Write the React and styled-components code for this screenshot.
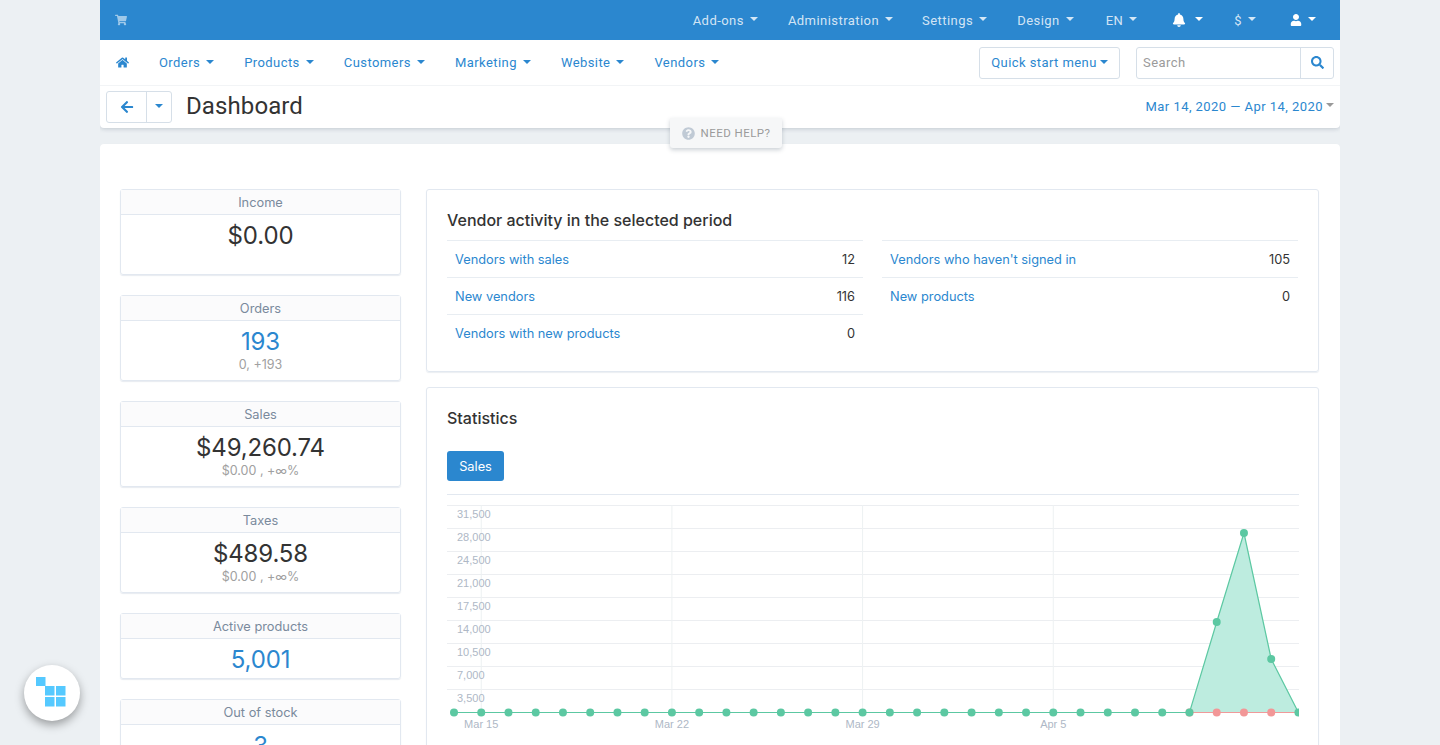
import React from 'react';
import styled, { createGlobalStyle } from 'styled-components';
import { FaShoppingCart, FaHome, FaArrowLeft, FaBell, FaUser, FaSearch, FaQuestionCircle } from 'react-icons/fa';

const Global = createGlobalStyle`
  html, body { margin: 0; padding: 0; height: 100%; overflow: hidden; background: #ecf0f3; }
  body { font-family: Inter, "Liberation Sans", sans-serif; color: #333; }
  * { box-sizing: border-box; }
`;
const Page = styled.div`width: 1240px; margin: 0 auto; height: 745px; overflow: hidden; position: relative;`;
const Header = styled.header`background: #fff; border-radius: 0 0 4px 4px; box-shadow: 0 1px 4px rgba(50,70,90,.22); height: 128px;`;
const TopBar = styled.div`height: 40px; background: #2b87cf; display: flex; align-items: center; justify-content: space-between; padding: 0 24px 0 15px;`;
const CartMark = styled.span`color: rgba(255,255,255,.55); font-size: 12px; display: flex;`;
const TopMenu = styled.nav`display: flex; align-items: center;`;
const Caret = styled.i`display: inline-block; width: 0; height: 0; margin-left: ${p => p.$gap ?? 6}px; border-left: 4px solid transparent; border-right: 4px solid transparent; border-top: 4px solid ${p => p.$color || 'currentColor'}; vertical-align: middle; position: relative; top: -1px;`;
const TopItem = styled.a`color: rgba(255,255,255,.8); font: 400 13px Roboto, sans-serif; letter-spacing: .45px; margin-left: ${p => p.$ml}px; display: flex; align-items: center; white-space: nowrap; ${p => p.$white && 'color:#fff;'}`;
const NavBar = styled.div`height: 46px; display: flex; align-items: center; padding: 0 6px 0 16px; border-bottom: 1px solid #f2f4f6;`;
const HomeMark = styled.span`color: #2b87cf; font-size: 13px; display: flex; margin-right: 30px;`;
const NavItem = styled.a`color: #2b87cf; font: 400 13px Roboto, sans-serif; letter-spacing: .43px; margin-right: 30px; display: flex; align-items: center; white-space: nowrap;`;
const Spacer = styled.div`flex: 1;`;
const QuickBtn = styled.button`height: 32px; width: 141px; padding: 0; margin-right: 16px; background: #fff; border: 1px solid #d6dfe8; border-radius: 3px; color: #2b87cf; font: 400 13px Roboto, sans-serif; letter-spacing: .42px; display: flex; align-items: center; justify-content: center;`;
const SearchBox = styled.div`width: 198px; height: 32px; border: 1px solid #d6dfe8; border-radius: 3px; display: flex;`;
const SearchInput = styled.div`flex: 1; padding-left: 6px; color: #9b9b9b; font: 400 13px/30px Roboto, sans-serif; letter-spacing: .45px;`;
const SearchBtn = styled.span`width: 33px; border-left: 1px solid #d6dfe8; color: #2b87cf; display: flex; align-items: center; justify-content: center; font-size: 13px;`;
const TitleRow = styled.div`height: 42px; display: flex; align-items: center; padding: 0 6px;`;
const BackGroup = styled.div`width: 66px; height: 32px; border: 1px solid #d6dfe8; border-radius: 3px; display: flex; margin-right: 14px; color: #2b87cf;`;
const BackBtn = styled.span`width: 40px; display: flex; align-items: center; justify-content: center; border-right: 1px solid #d6dfe8; font-size: 14px;`;
const BackCaret = styled.span`flex: 1; display: flex; align-items: center; justify-content: center;`;
const Title = styled.h1`margin: 0 0 2px; font: 400 24px Roboto, sans-serif; letter-spacing: .1px; color: #333;`;
const DateRange = styled.a`color: #2b87cf; font: 400 13px Roboto, sans-serif; letter-spacing: .45px; display: flex; align-items: center; margin-bottom: 2px;`;
const Help = styled.div`position: absolute; left: 570px; top: 118px; width: 112px; height: 30px; background: #f6f7f8; box-shadow: 0 2px 4px rgba(50,70,90,.25); border-radius: 0 0 3px 3px; display: flex; align-items: center; justify-content: center; color: #9b9b9b; font: 400 11.5px Roboto, sans-serif; letter-spacing: .45px; z-index: 3; gap: 6px;`;
const HelpIcon = styled.span`color: #c0cad5; font-size: 13px; display: flex;`;
const Main = styled.main`margin-top: 16px; background: #fff; border-radius: 4px; padding: 45px 21px 0 20px; display: grid; grid-template-columns: 281px 893px; column-gap: 25px; box-shadow: 0 1px 2px rgba(50,70,90,.08); min-height: 700px;`;
const Side = styled.div`display: flex; flex-direction: column; gap: 20px;`;
const Stat = styled.section`height: ${p => (p.$short ? 66 : 86)}px; flex: none; border: 1px solid #e2e8f0; border-radius: 3px; box-shadow: 0 1px 1px rgba(60,90,130,.12); text-align: center;`;
const StatHead = styled.div`height: 25px; background: #fbfbfc; border-bottom: 1px solid #e2e8f0; color: #7a8a9c; font-size: 12.8px; line-height: 26px;`;
const StatValue = styled.div`font-size: 24px; letter-spacing: -.15px; line-height: 28px; padding-top: 7px; color: ${p => (p.$link ? '#2b87cf' : '#333')};`;
const StatDelta = styled.div`font-size: 12.5px; line-height: 18px; color: #a0a0a0;`;
const Content = styled.div`display: flex; flex-direction: column; gap: 15px;`;
const Panel = styled.section`border: 1px solid #e2e8f0; border-radius: 3px; box-shadow: 0 1px 1px rgba(60,90,130,.1); padding: 20px 19px 10px 20px;`;
const PanelTitle = styled.h2`margin: 0; font-size: 16px; line-height: 20px; font-weight: 500; color: #333;`;
const Tables = styled.div`display: grid; grid-template-columns: 416px 416px; column-gap: 19px; margin-top: 10px; height: 121px;`;
const Rows = styled.div`display: flex; flex-direction: column;`;
const Row = styled.div`height: 37px; border-top: 1px solid #e8edf2; display: flex; justify-content: space-between; align-items: center; padding: 0 8px; font-size: 12.8px;`;
const RowLink = styled.a`color: #2b87cf;`;
const RowNum = styled.span`color: #333;`;
const Tabs = styled.div`margin-top: 23px; padding-bottom: 13px; border-bottom: 1px solid #e2e8f0;`;
const TabBtn = styled.button`display: block; height: 30px; width: 57px; padding: 0; background: #2b87cf; color: #fff; border: 0; border-radius: 3px; font: 400 12.8px Inter, sans-serif;`;
const Chart = styled.svg`display: block; margin-top: 10px; overflow: hidden;`;
const Fab = styled.div`position: fixed; left: 24px; top: 665px; width: 56px; height: 56px; border-radius: 50%; background: #fff; box-shadow: 0 4px 10px rgba(0,0,0,.35); display: flex; align-items: center; justify-content: center; z-index: 5;`;
const LogoMark = styled.svg`margin: -2px 0 0 -2px;`;

const stats = [
  { label: 'Income', value: '$0.00' },
  { label: 'Orders', value: '193', link: true, delta: '0, +193' },
  { label: 'Sales', value: '$49,260.74', delta: '$0.00 , +∞%' },
  { label: 'Taxes', value: '$489.58', delta: '$0.00 , +∞%' },
  { label: 'Active products', value: '5,001', link: true, short: true },
  { label: 'Out of stock', value: '3', link: true },
];
const top = [['Add-ons', 0], ['Administration', 30], ['Settings', 29], ['Design', 30], ['EN', 32]];
const nav = ['Orders', 'Products', 'Customers', 'Marketing', 'Website', 'Vendors'];

const L = 27, zero = 207.5, step = 27.24;
const pts = Array.from({ length: 32 }, (_, i) => L + i * step);
const green = i => (i === 29 ? 28 : i === 28 ? 117 : i === 30 ? 154 : zero);
const gy = [0, 23, 46, 69, 92, 115, 138, 161, 184];
const yl = ['31,500', '28,000', '24,500', '21,000', '17,500', '14,000', '10,500', '7,000', '3,500'];

function StatChart() {
  const area = pts.slice(27).map((x, k) => `${x},${green(27 + k)}`).join(' ');
  return (
    <Chart width="852" height="240" viewBox="20 0 852 240">
      {gy.map(y => <line key={y} x1="20" x2="872" y1={y + .5} y2={y + .5} stroke="#eceef1" />)}
      {[1, 8, 15, 22].map(i => <line key={i} x1={pts[i]} x2={pts[i]} y1="0" y2={zero} stroke="#edf1f2" />)}
      {yl.map((t, i) => <text key={t} x="30" y={gy[i] + 13} fontFamily="Liberation Sans" fontSize="11" fill="#aeb8c6">{t}</text>)}
      {[[1, 'Mar 15'], [8, 'Mar 22'], [15, 'Mar 29'], [22, 'Apr 5']].map(([i, t]) => <text key={t} x={pts[i]} y="223" textAnchor="middle" fontFamily="Liberation Sans" fontSize="11" fill="#aeb8c6">{t}</text>)}
      <polygon points={area} fill="#bdecdf" />
      <line x1={pts[0]} x2={pts[31]} y1={zero} y2={zero} stroke="#f09a9a" strokeWidth="1.2" />
      {pts.slice(27, 31).map(x => <circle key={x} cx={x} cy={zero} r="4" fill="#f29797" />)}
      <polyline points={pts.map((x, i) => `${x},${green(i)}`).join(' ')} fill="none" stroke="#5cc8a2" strokeWidth="1.2" />
      {pts.map((x, i) => (i >= 28 && i <= 30) ? <circle key={i} cx={x} cy={green(i)} r="4" fill="#5cc8a2" /> : <circle key={i} cx={x} cy={zero} r="4" fill="#5cc8a2" />)}
    </Chart>
  );
}

function Logo() {
  return (
    <LogoMark width="30" height="30" viewBox="0 0 30 30">
      <g fill="#55c9ff">
        <rect x="0" y="0" width="9.5" height="9" />
        <rect x="9" y="9" width="9.5" height="9.5" />
        <rect x="20" y="9" width="9.5" height="9.5" />
        <rect x="9" y="20" width="9.5" height="9.5" />
        <rect x="20" y="20" width="9.5" height="9.5" />
      </g>
    </LogoMark>
  );
}

export default function App() {
  return (
    <Page>
      <Global />
      <Header>
        <TopBar>
          <CartMark><FaShoppingCart /></CartMark>
          <TopMenu>
            {top.map(([t, ml]) => <TopItem key={t} $ml={ml}>{t}<Caret /></TopItem>)}
            <TopItem $ml={35} $white><FaBell size={14} /><Caret $gap={9} /></TopItem>
            <TopItem $ml={31}>$<Caret /></TopItem>
            <TopItem $ml={34} $white><FaUser size={12} /><Caret /></TopItem>
          </TopMenu>
        </TopBar>
        <NavBar>
          <HomeMark><FaHome /></HomeMark>
          {nav.map(t => <NavItem key={t}>{t}<Caret /></NavItem>)}
          <Spacer />
          <QuickBtn>Quick start menu<Caret $gap={3} /></QuickBtn>
          <SearchBox>
            <SearchInput>Search</SearchInput>
            <SearchBtn><FaSearch /></SearchBtn>
          </SearchBox>
        </NavBar>
        <TitleRow>
          <BackGroup>
            <BackBtn><FaArrowLeft /></BackBtn>
            <BackCaret><Caret $gap={0} /></BackCaret>
          </BackGroup>
          <Title>Dashboard</Title>
          <Spacer />
          <DateRange>Mar 14, 2020 — Apr 14, 2020<Caret $gap={3} $color="#999" /></DateRange>
        </TitleRow>
      </Header>
      <Help><HelpIcon><FaQuestionCircle /></HelpIcon>NEED HELP?</Help>
      <Main>
        <Side>
          {stats.map(s => (
            <Stat key={s.label} $short={s.short}>
              <StatHead>{s.label}</StatHead>
              <StatValue $link={s.link}>{s.value}</StatValue>
              {s.delta && <StatDelta>{s.delta}</StatDelta>}
            </Stat>
          ))}
        </Side>
        <Content>
          <Panel>
            <PanelTitle>Vendor activity in the selected period</PanelTitle>
            <Tables>
              <Rows>
                <Row><RowLink>Vendors with sales</RowLink><RowNum>12</RowNum></Row>
                <Row><RowLink>New vendors</RowLink><RowNum>116</RowNum></Row>
                <Row><RowLink>Vendors with new products</RowLink><RowNum>0</RowNum></Row>
              </Rows>
              <Rows>
                <Row><RowLink>Vendors who haven't signed in</RowLink><RowNum>105</RowNum></Row>
                <Row><RowLink>New products</RowLink><RowNum>0</RowNum></Row>
              </Rows>
            </Tables>
          </Panel>
          <Panel>
            <PanelTitle>Statistics</PanelTitle>
            <Tabs><TabBtn>Sales</TabBtn></Tabs>
            <StatChart />
          </Panel>
        </Content>
      </Main>
      <Fab><Logo /></Fab>
    </Page>
  );
}
